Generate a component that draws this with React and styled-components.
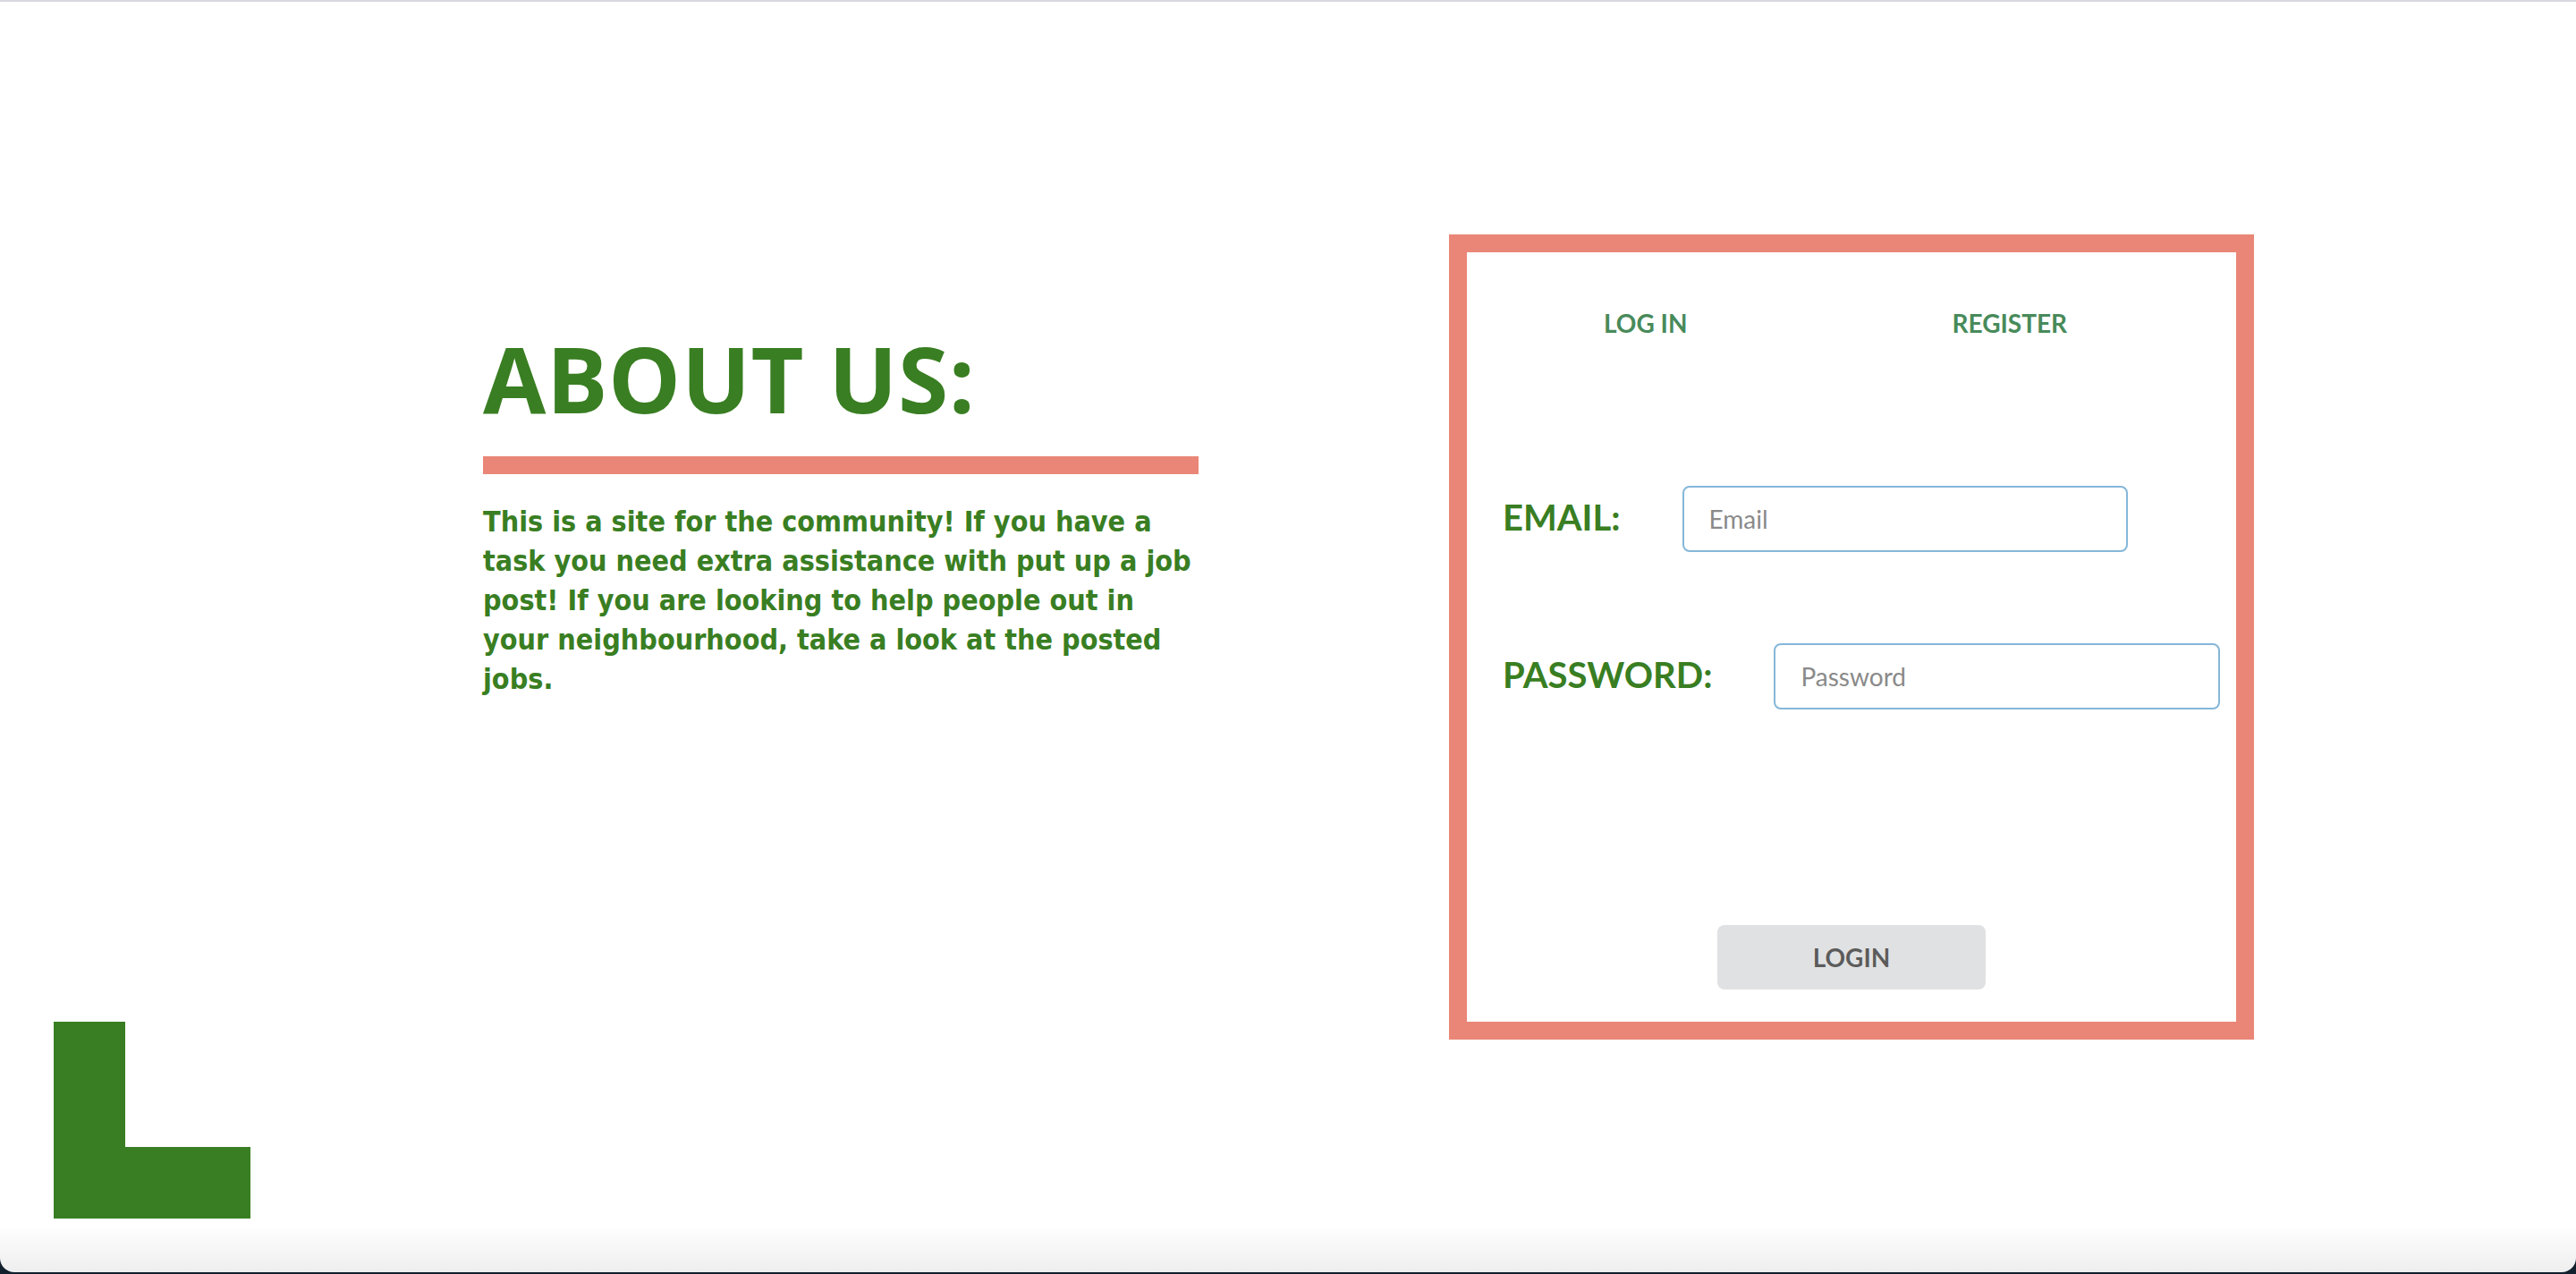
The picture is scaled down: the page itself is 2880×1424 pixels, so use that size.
import React from "react";
import styled, { createGlobalStyle } from "styled-components";

const GREEN = "#397e22";
const SALMON = "#ea8677";

const Global = createGlobalStyle`
  html, body {
    margin: 0;
    padding: 0;
    background: #13202d;
  }
  * { box-sizing: border-box; }
`;

const Window = styled.div`
  height: 1422px;
  border-top: 2px solid #d9d7df;
  border-radius: 0 0 16px 16px;
  background: linear-gradient(to bottom, #ffffff calc(100% - 52px), #eeeeee 100%);
  display: flex;
  flex-direction: column;
  overflow: hidden;
`;

const Main = styled.main`
  height: 1140px;
  flex-shrink: 0;
  display: flex;
  align-items: flex-start;
  gap: 280px;
  padding: 260px 0 0 540px;
`;

const About = styled.section`
  width: 800px;
  flex-shrink: 0;
  margin-top: 110px;
  display: flex;
  flex-direction: column;
`;

const Heading = styled.h1`
  margin: 0;
  font-family: "Open Sans", "Liberation Sans", sans-serif;
  font-weight: 700;
  font-size: 102px;
  letter-spacing: 0.6px;
  line-height: 1;
  color: ${GREEN};
  white-space: nowrap;
`;

const Rule = styled.div`
  margin-top: 36px;
  height: 20px;
  width: 800px;
  background: ${SALMON};
`;

const Blurb = styled.p`
  margin: 31px 0 0;
  font-family: "DejaVu Sans Condensed", "DejaVu Sans", sans-serif;
  font-stretch: condensed;
  font-weight: 700;
  font-size: 32px;
  line-height: 44px;
  color: ${GREEN};
  white-space: nowrap;
`;

const Card = styled.section`
  width: 900px;
  height: 900px;
  flex-shrink: 0;
  border: 20px solid ${SALMON};
  background: #fff;
  display: flex;
  flex-direction: column;
  font-family: Lato, "Open Sans", sans-serif;
`;

const Tabs = styled.nav`
  display: flex;
  gap: 296px;
  padding: 62px 0 0 153px;
`;

const Tab = styled.a`
  font-family: Lato, sans-serif;
  font-weight: 700;
  font-size: 28px;
  line-height: 34px;
  color: #488a5a;
  text-decoration: none;
  cursor: pointer;
`;

const Form = styled.form`
  display: flex;
  flex-direction: column;
  gap: 102px;
  margin-top: 165px;
  padding-left: 40px;
`;

const Row = styled.div`
  display: flex;
  align-items: center;
  gap: 69px;
`;

const Label = styled.label`
  font-family: Lato, sans-serif;
  font-weight: 700;
  font-size: 40px;
  line-height: 48px;
  color: ${GREEN};
  margin-bottom: 5px;
  white-space: nowrap;
`;

const Input = styled.input`
  width: ${(p) => p.$w}px;
  height: 74px;
  border: 2px solid #85b7d9;
  border-radius: 8px;
  padding: 0 28px;
  font-family: Lato, sans-serif;
  font-size: 28px;
  color: #333;
  outline: none;
  background: #fff;
  &::placeholder {
    color: #8a8a8a;
  }
`;

const Button = styled.button`
  align-self: center;
  margin: 139px 0 0 -40px;
  width: 300px;
  height: 72px;
  border: none;
  border-radius: 8px;
  background: #e0e1e2;
  color: rgba(0, 0, 0, 0.6);
  font-family: Lato, sans-serif;
  font-weight: 700;
  font-size: 28px;
  cursor: pointer;
`;

const Footer = styled.footer`
  padding-left: 60px;
`;

const Logo = styled.div`
  width: 220px;
  height: 220px;
  display: grid;
  grid-template-columns: 80px 140px;
  grid-template-rows: 140px 80px;
`;

const LogoStem = styled.div`
  grid-column: 1;
  grid-row: 1 / span 2;
  background: ${GREEN};
`;

const LogoFoot = styled.div`
  grid-column: 2;
  grid-row: 2;
  background: ${GREEN};
`;

export default function App() {
  return (
    <>
      <Global />
      <Window>
        <Main>
          <About>
            <Heading>ABOUT US:</Heading>
            <Rule />
            <Blurb>
              This is a site for the community! If you have a
              <br />
              task you need extra assistance with put up a job
              <br />
              post! If you are looking to help people out in
              <br />
              your neighbourhood, take a look at the posted
              <br />
              jobs.
            </Blurb>
          </About>
          <Card>
            <Tabs>
              <Tab>LOG IN</Tab>
              <Tab>REGISTER</Tab>
            </Tabs>
            <Form onSubmit={(e) => e.preventDefault()}>
              <Row>
                <Label htmlFor="email">EMAIL:</Label>
                <Input id="email" type="email" placeholder="Email" $w={498} />
              </Row>
              <Row>
                <Label htmlFor="password">PASSWORD:</Label>
                <Input id="password" type="password" placeholder="Password" $w={499} />
              </Row>
              <Button type="submit">LOGIN</Button>
            </Form>
          </Card>
        </Main>
        <Footer>
          <Logo>
            <LogoStem />
            <LogoFoot />
          </Logo>
        </Footer>
      </Window>
    </>
  );
}
